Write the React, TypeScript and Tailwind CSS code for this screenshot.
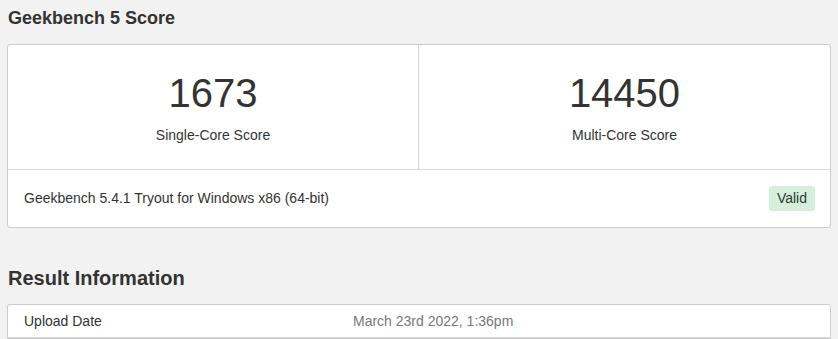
export default function App() {
    const font = { fontFamily: '"Liberation Sans", Arial, sans-serif' }

    return (
        <div className="min-h-screen bg-[#f2f2f2] px-[7px] pt-[7px] text-[#333]" style={font}>
            <h2 className="pl-px text-[18px] font-bold leading-[22px]">Geekbench 5 Score</h2>

            <div className="mt-[15px] w-[824px] rounded-[3px] border border-[#cccccc] bg-white">
                <div className="grid grid-cols-2">
                    <div className="flex h-[124px] flex-col items-center border-r border-[#d9d9d9] pt-[24px]">
                        <div className="text-[40px] leading-[48px]">1673</div>
                        <div className="mt-[8px] text-[14px] leading-[20px]">Single-Core Score</div>
                    </div>
                    <div className="flex h-[124px] flex-col items-center pt-[24px]">
                        <div className="text-[40px] leading-[48px]">14450</div>
                        <div className="mt-[8px] text-[14px] leading-[20px]">Multi-Core Score</div>
                    </div>
                </div>
                <div className="flex h-[58px] items-center justify-between border-t border-[#d9d9d9] pl-[16px] pr-[15px]">
                    <span className="text-[14px]">Geekbench 5.4.1 Tryout for Windows x86 (64-bit)</span>
                    <span className="rounded-[3px] bg-[#d6efdc] px-[8px] py-[3px] text-[14px] leading-[19px] text-[#2b3a33]">
                        Valid
                    </span>
                </div>
            </div>

            <h2 className="mt-[38px] pl-px text-[20px] font-bold leading-[24px]">Result Information</h2>

            <div className="mt-[14px] w-[824px] rounded-t-[3px] border border-[#cccccc] bg-white">
                <div className="grid grid-cols-[329px_1fr] border-b border-[#d9d9d9] py-[6px] pl-[16px] text-[14px] leading-[20px]">
                    <span>Upload Date</span>
                    <span className="text-[#777]">March 23rd 2022, 1:36pm</span>
                </div>
            </div>
        </div>
    )
}
